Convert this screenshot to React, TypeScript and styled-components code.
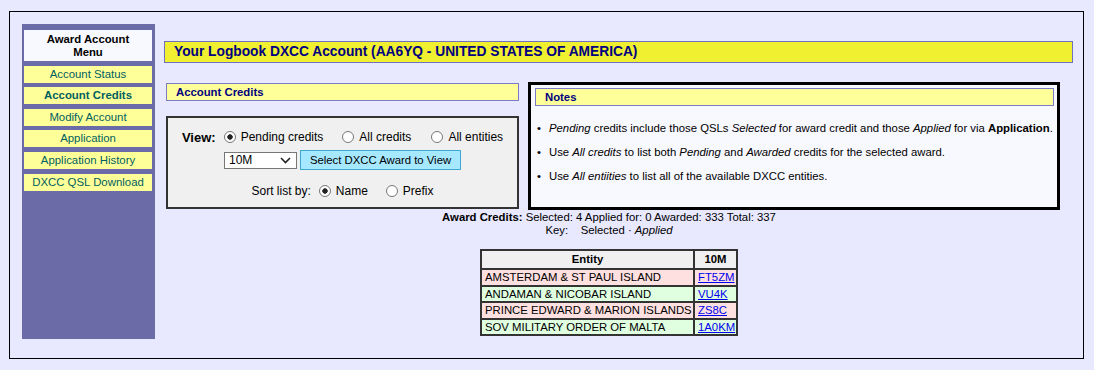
import React from 'react';
import styled, { createGlobalStyle } from 'styled-components';

const Global = createGlobalStyle`
  html, body { margin: 0; padding: 0; background: #E8E8FF; }
  body { font-family: "Liberation Sans", Arial, sans-serif; color: #000; }
`;

const Page = styled.div`
  box-sizing: border-box;
  height: 370px;
  padding: 11px 0 0 9px;
`;

const Frame = styled.div`
  box-sizing: border-box;
  width: 1075px;
  height: 348px;
  border: 1px solid #000;
  padding: 12px 0 0 12px;
  display: flex;
  align-items: flex-start;
`;

const Sidebar = styled.nav`
  box-sizing: border-box;
  width: 133px;
  height: 315px;
  background: #6B6BA8;
  padding: 6px 3px 0 2px;
  display: flex;
  flex-direction: column;
`;

const MenuHead = styled.div`
  box-sizing: border-box;
  height: 31px;
  padding-top: 3px;
  background: #F8F8FF;
  font-size: 11.33px;
  font-weight: bold;
  line-height: 13px;
  text-align: center;
`;

const MenuItem = styled.a<{ $active?: boolean }>`
  display: block;
  height: 17px;
  margin-top: 4.6px;
  background: #FFFF99;
  color: #006060;
  font-size: 11.4px;
  font-weight: ${(p) => (p.$active ? 'bold' : 'normal')};
  line-height: 17px;
  text-align: center;
  text-decoration: none;
`;

const Main = styled.main`
  width: 909px;
  margin-left: 9px;
  padding-top: 17px;
`;

const TitleBar = styled.h1`
  box-sizing: border-box;
  margin: 0;
  height: 22px;
  padding-left: 9px;
  border: 1px solid #7070C0;
  background: #F0F030;
  color: #000080;
  font-size: 13.75px;
  font-weight: bold;
  line-height: 20px;
`;

const Columns = styled.div`
  display: flex;
  align-items: flex-start;
  gap: 9px;
  margin: 19px 0 0 2px;
`;

const LeftCol = styled.div`
  width: 353px;
  padding-top: 1px;
`;

const SectionBar = styled.h2`
  box-sizing: border-box;
  margin: 0;
  height: 18px;
  padding-left: 9px;
  border: 1px solid #7B7BC6;
  background: #FFFF99;
  color: #000080;
  font-size: 11.33px;
  font-weight: bold;
  line-height: 16px;
`;

const FormBox = styled.form`
  box-sizing: border-box;
  margin-top: 15px;
  height: 93px;
  padding-top: 9px;
  border: 2px solid #333;
  background: #F0F0F0;
  display: flex;
  flex-direction: column;
  align-items: center;
`;

const FormRow = styled.div<{ $mt?: number }>`
  display: flex;
  align-items: center;
  height: 20px;
  margin-top: ${(p) => p.$mt ?? 0}px;
  font-size: 12px;
`;

const ViewLabel = styled.span`
  font-size: 13px;
  font-weight: bold;
`;

const Option = styled.label<{ $ml: number }>`
  display: inline-flex;
  align-items: center;
  gap: 5px;
  margin-left: ${(p) => p.$ml}px;
`;

const Radio = styled.input.attrs({ type: 'radio' })`
  appearance: none;
  box-sizing: border-box;
  width: 12px;
  height: 12px;
  margin: 0;
  border: 1px solid #777;
  border-radius: 50%;
  background: #fff;
  &:checked {
    background: radial-gradient(circle, #222 0 2.4px, #fff 3px);
  }
`;

const SelectWrap = styled.div`
  position: relative;
  width: 73px;
  height: 17px;
`;

const Select = styled.select`
  appearance: none;
  box-sizing: border-box;
  width: 73px;
  height: 17px;
  margin: 0;
  padding: 0 0 0 4px;
  border: 1px solid #777;
  border-radius: 0;
  background: #fff;
  color: #000;
  font-family: "Liberation Sans", Arial, sans-serif;
  font-size: 12px;
`;

const Chevron = styled.svg`
  position: absolute;
  right: 6px;
  top: 5px;
  pointer-events: none;
`;

const Button = styled.button`
  box-sizing: border-box;
  width: 161px;
  height: 20px;
  margin: 0 0 0 3px;
  padding: 0;
  border: 1px solid #40A8D0;
  background: #A6E8FF;
  color: #000;
  font-family: "Liberation Sans", Arial, sans-serif;
  font-size: 11.33px;
`;

const SortLabel = styled.span`
  margin-right: 8px;
`;

const NotesBox = styled.section`
  box-sizing: border-box;
  width: 532px;
  height: 128px;
  padding: 3px 3px 0 4px;
  border: 3px solid #000;
  background: #F8F8FF;
`;

const NotesList = styled.ul`
  margin: 15px 0 0;
  padding: 0;
  list-style: none;
  font-size: 11.33px;
  line-height: 14px;
`;

const Note = styled.li`
  display: flex;
  margin-bottom: 10px;
`;

const Bullet = styled.span`
  width: 12px;
  padding-left: 2px;
`;

const Summary = styled.div`
  width: 886px;
  margin: 1px 0 0 2px;
  font-size: 11.33px;
  line-height: 13px;
  text-align: center;
`;

const Table = styled.table`
  width: 258px;
  margin: 12px auto 0;
  table-layout: fixed;
  border-collapse: separate;
  border-spacing: 2px;
  background: #333;
  font-size: 11.33px;
  text-align: left;
`;

const EntityCol = styled.col`
  width: 211px;
`;

const BandCol = styled.col`
  width: 41px;
`;

const Th = styled.th`
  height: 17px;
  padding: 0;
  background: #F0F0F0;
  font-weight: bold;
  text-align: center;
  line-height: 17px;
`;

const Td = styled.td<{ $kind: 'selected' | 'applied' }>`
  height: 14.5px;
  padding: 0 0 0 3px;
  background: ${(p) => (p.$kind === 'selected' ? '#FFE0E0' : '#E0FFE0')};
  line-height: 14.5px;
  white-space: nowrap;
  overflow: hidden;
`;

const Call = styled.a`
  color: #0000EE;
  text-decoration: underline;
`;

const menu = [
  'Account Status',
  'Account Credits',
  'Modify Account',
  'Application',
  'Application History',
  'DXCC QSL Download',
];

const rows: { entity: string; call: string; kind: 'selected' | 'applied' }[] = [
  { entity: 'AMSTERDAM & ST PAUL ISLAND', call: 'FT5ZM', kind: 'selected' },
  { entity: 'ANDAMAN & NICOBAR ISLAND', call: 'VU4K', kind: 'applied' },
  { entity: 'PRINCE EDWARD & MARION ISLANDS', call: 'ZS8C', kind: 'selected' },
  { entity: 'SOV MILITARY ORDER OF MALTA', call: '1A0KM', kind: 'applied' },
];

export default function App() {
  return (
    <Page>
      <Global />
      <Frame>
        <Sidebar>
          <MenuHead>
            Award Account
            <br />
            Menu
          </MenuHead>
          {menu.map((m) => (
            <MenuItem key={m} href="#" $active={m === 'Account Credits'}>
              {m}
            </MenuItem>
          ))}
        </Sidebar>
        <Main>
          <TitleBar>Your Logbook DXCC Account (AA6YQ - UNITED STATES OF AMERICA)</TitleBar>
          <Columns>
            <LeftCol>
              <SectionBar>Account Credits</SectionBar>
              <FormBox onSubmit={(e) => e.preventDefault()}>
                <FormRow>
                  <ViewLabel>View:</ViewLabel>
                  <Option $ml={8}>
                    <Radio name="view" defaultChecked />
                    Pending credits
                  </Option>
                  <Option $ml={19}>
                    <Radio name="view" />
                    All credits
                  </Option>
                  <Option $ml={20}>
                    <Radio name="view" />
                    All entities
                  </Option>
                </FormRow>
                <FormRow $mt={3}>
                  <SelectWrap>
                    <Select defaultValue="10M">
                      <option>10M</option>
                      <option>12M</option>
                      <option>15M</option>
                      <option>17M</option>
                      <option>20M</option>
                    </Select>
                    <Chevron width="11" height="7" viewBox="0 0 11 7">
                      <path d="M1 1 L5.5 5.5 L10 1" fill="none" stroke="#222" strokeWidth="1.6" />
                    </Chevron>
                  </SelectWrap>
                  <Button type="submit">Select DXCC Award to View</Button>
                </FormRow>
                <FormRow $mt={11}>
                  <SortLabel>Sort list by:</SortLabel>
                  <Option $ml={0}>
                    <Radio name="sort" defaultChecked />
                    Name
                  </Option>
                  <Option $ml={18}>
                    <Radio name="sort" />
                    Prefix
                  </Option>
                </FormRow>
              </FormBox>
            </LeftCol>
            <NotesBox>
              <SectionBar as="h3">Notes</SectionBar>
              <NotesList>
                <Note>
                  <Bullet>•</Bullet>
                  <span>
                    <i>Pending</i> credits include those QSLs <i>Selected</i> for award credit and those{' '}
                    <i>Applied</i> for via <b>Application</b>.
                  </span>
                </Note>
                <Note>
                  <Bullet>•</Bullet>
                  <span>
                    Use <i>All credits</i> to list both <i>Pending</i> and <i>Awarded</i> credits for the selected
                    award.
                  </span>
                </Note>
                <Note>
                  <Bullet>•</Bullet>
                  <span>
                    Use <i>All entiities</i> to list all of the available DXCC entities.
                  </span>
                </Note>
              </NotesList>
            </NotesBox>
          </Columns>
          <Summary>
            <div>
              <b>Award Credits:</b> Selected: 4 Applied for: 0 Awarded: 333 Total: 337
            </div>
            <div>
              Key:{'\u00a0\u00a0\u00a0\u00a0'}Selected · <i>Applied</i>
            </div>
            <Table>
              <colgroup>
                <EntityCol />
                <BandCol />
              </colgroup>
              <thead>
                <tr>
                  <Th>Entity</Th>
                  <Th>10M</Th>
                </tr>
              </thead>
              <tbody>
                {rows.map((r) => (
                  <tr key={r.call}>
                    <Td $kind={r.kind}>{r.entity}</Td>
                    <Td $kind={r.kind}>
                      <Call href="#">{r.call}</Call>
                    </Td>
                  </tr>
                ))}
              </tbody>
            </Table>
          </Summary>
        </Main>
      </Frame>
    </Page>
  );
}
